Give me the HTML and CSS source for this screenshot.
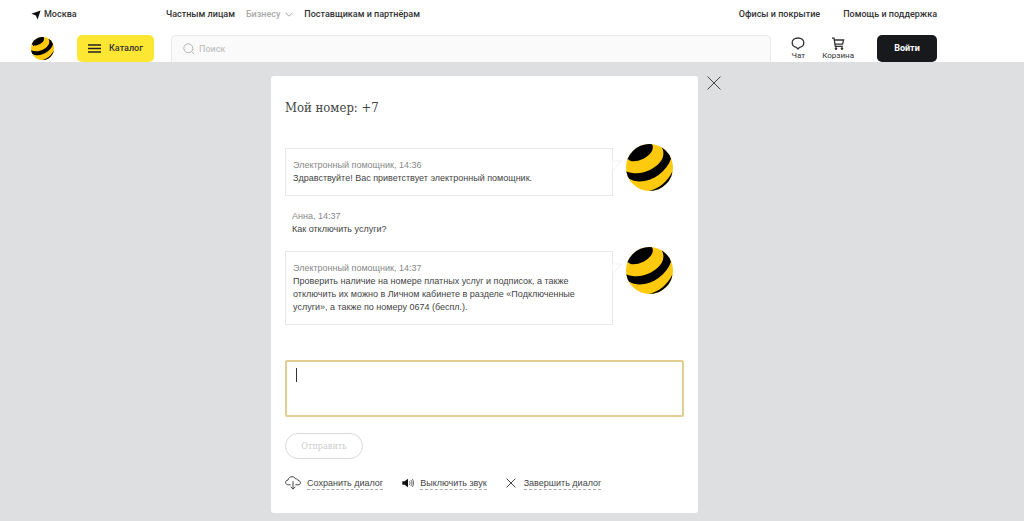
FILE: index.html
```
<!DOCTYPE html>
<html lang="ru">
<head>
<meta charset="utf-8">
<meta name="viewport" content="width=device-width, initial-scale=1">
<title>Чат с электронным помощником</title>
<link rel="stylesheet" href="styles.css">
</head>
<body>
<svg class="defs" aria-hidden="true">
  <defs>
    <clipPath id="ball-clip"><circle cx="70" cy="70" r="70"/></clipPath>
    <symbol id="ball" viewBox="0 0 140 140">
      <g clip-path="url(#ball-clip)">
        <rect class="ball-base" width="140" height="140"/>
        <path d="M9 46C9 53 32 54 52 44C70 34 80 22 80 10C80 5 78 2 76 -2L0 -4V46Z"/>
        <path d="M-2 80C22 91 50 89 74 76C98 63 110 47 111 33C112 25 111 18 106 10L126 14L134 44C128 62 116 78 97 92C70 112 34 118 8 103L-2 98Z"/>
        <path d="M60 142C92 137 122 116 138 82L144 142H60Z"/>
      </g>
    </symbol>
  </defs>
</svg>

<header class="header">
  <div class="container">
    <nav class="topbar" aria-label="Разделы сайта">
      <a class="topbar-link city" href="#">
        <svg class="icon-pin" viewBox="0 0 10 10" aria-hidden="true"><path d="M9.600 .4L6.600 9.600L4.800 5.400L.4 3.800Z"/></svg>
        Москва
      </a>
      <a class="topbar-link" href="#">Частным лицам</a>
      <a class="topbar-link muted" href="#">
        Бизнесу
        <svg class="icon-chevron" viewBox="0 0 8 5" aria-hidden="true"><path d="M.5 .7L4 4.200L7.500 .7"/></svg>
      </a>
      <a class="topbar-link" href="#">Поставщикам и партнёрам</a>
      <a class="topbar-link offices" href="#">Офисы и покрытие</a>
      <a class="topbar-link" href="#">Помощь и поддержка</a>
    </nav>
    <div class="mainbar">
      <a class="logo" href="#" aria-label="На главную"><svg class="logo-ball" viewBox="0 0 140 140" aria-hidden="true"><use href="#ball"/></svg></a>
      <button class="catalog" type="button">
        <svg class="icon-menu" viewBox="0 0 13 9" aria-hidden="true"><path d="M0 1H13M0 4.500H13M0 8H13"/></svg>
        Каталог
      </button>
      <div class="search">
        <svg class="icon-search" viewBox="0 0 12 12" aria-hidden="true"><circle cx="5.300" cy="5.300" r="4.500"/><path d="M8.600 8.600L11.400 11.400"/></svg>
        <input class="search-input" type="search" placeholder="Поиск" aria-label="Поиск">
      </div>
      <a class="shortcut" href="#">
        <svg class="icon-chat" viewBox="0 0 14 13" aria-hidden="true"><path d="M5.400 10.400C2.700 9.900 1.200 8.100 1.200 5.800C1.200 3 3.500 1 7 1S12.800 3 12.800 5.800C12.800 8.100 11.300 9.900 8.600 10.400L7 12Z"/></svg>
        Чат
      </a>
      <a class="shortcut" href="#">
        <svg class="icon-cart" viewBox="0 0 14 13" aria-hidden="true"><path d="M1 1.200H3L4.300 9.400H11.800M3.300 3H12.600L11.600 7.200H4"/><circle cx="5" cy="11.600" r=".7"/><circle cx="11" cy="11.600" r=".7"/></svg>
        Корзина
      </a>
      <button class="login" type="button">Войти</button>
    </div>
  </div>
</header>

<main class="stage">
  <div class="dialog-wrap">
    <section class="dialog" role="dialog" aria-labelledby="dialog-title">
      <h1 class="title" id="dialog-title">Мой номер: +7</h1>

      <div class="messages">
        <article class="message">
          <div class="bubble">
            <p class="author">Электронный помощник, 14:36</p>
            <p>Здравствуйте! Вас приветствует электронный помощник.</p>
            <svg class="tail" viewBox="0 0 11 12" aria-hidden="true"><path d="M0 1H10L1 10"/></svg>
          </div>
          <svg class="avatar" viewBox="0 0 140 140" aria-hidden="true"><use href="#ball"/></svg>
        </article>
        <article class="own">
          <p class="author">Анна, 14:37</p>
          <p>Как отключить услуги?</p>
        </article>
        <article class="message">
          <div class="bubble">
            <p class="author">Электронный помощник, 14:37</p>
            <p>Проверить наличие на номере платных услуг и подписок, а также отключить их можно в Личном кабинете в разделе «Подключенные услуги», а также по номеру 0674 (беспл.).</p>
            <svg class="tail" viewBox="0 0 11 12" aria-hidden="true"><path d="M0 1H10L1 10"/></svg>
          </div>
          <svg class="avatar" viewBox="0 0 140 140" aria-hidden="true"><use href="#ball"/></svg>
        </article>
      </div>

      <form class="compose">
        <div class="field">
          <textarea class="field-input" aria-label="Сообщение"></textarea>
          <span class="caret"></span>
        </div>
        <button class="send" type="button" disabled>Отправить</button>
      </form>

      <div class="actions">
        <button class="action" type="button">
          <svg class="icon-cloud" viewBox="0 0 16 14" aria-hidden="true"><path d="M5.600 8.800H3.400C1.800 8.800 .6 7.800 .6 6.400C.6 5 1.600 4.200 3 4.100C3.300 2 4.900 .7 7 .7C8.700 .7 10.100 1.600 10.700 3C12 2.600 13 3.400 13.100 4.500C14.500 4.600 15.400 5.500 15.400 6.700C15.400 8 14.500 8.800 13.100 8.800H10.400M8 5.200V13M5.700 10.800L8 13.100L10.300 10.800"/></svg>
          <span class="action-text">Сохранить диалог</span>
        </button>
        <button class="action" type="button">
          <svg class="icon-sound" viewBox="0 0 12 10" aria-hidden="true"><path class="solid" d="M.3 3.200H2.600L6 .8V9.200L2.600 6.800H.3Z"/><path d="M7.400 3.200C8.200 4.300 8.200 5.700 7.400 6.800M8.900 2C10.300 3.800 10.300 6.200 8.900 8M10.300 1C12 3.300 12 6.700 10.300 9"/></svg>
          <span class="action-text">Выключить звук</span>
        </button>
        <button class="action finish" type="button">
          <svg class="icon-cross" viewBox="0 0 10 10" aria-hidden="true"><path d="M.6 .6L9.400 9.400M9.400 .6L.6 9.400"/></svg>
          <span class="action-text">Завершить диалог</span>
        </button>
      </div>
    </section>
    <button class="close" type="button" aria-label="Закрыть">
      <svg class="icon-close" viewBox="0 0 14 14" aria-hidden="true"><path d="M.5 .5L13.500 13.500M13.500 .5L.5 13.500"/></svg>
    </button>
  </div>
</main>
</body>
</html>
```
FILE: styles.css
```
* {
  box-sizing: border-box;
}

body {
  margin: 0;
  min-height: 100vh;
  display: flex;
  flex-direction: column;
  background: #dddfe1;
  color: #444;
  font: 9px/13px "Liberation Sans", Arial, sans-serif;
}

p,
h1 {
  margin: 0;
}

button {
  margin: 0;
  padding: 0;
  border: 0;
  background: none;
  color: inherit;
  font: inherit;
  cursor: pointer;
}

a {
  color: inherit;
  text-decoration: none;
}

svg {
  display: block;
  flex: none;
  fill: none;
  stroke: currentColor;
}

.defs {
  position: absolute;
  width: 0;
  height: 0;
}

.logo-ball,
.avatar {
  fill: #000;
  stroke: none;
}

.ball-base {
  fill: #ffc90e;
}

/* Header */

.header {
  padding: 8px 87px 0 31px;
  background: #fff;
  color: #333;
  font-family: Roboto, "Open Sans", sans-serif;
  font-weight: 500;
}

.container {
  max-width: 906px;
  margin: 0 auto;
}

.topbar {
  display: flex;
  align-items: center;
  gap: 11px;
  height: 13px;
  white-space: nowrap;
}

.topbar-link {
  display: flex;
  align-items: center;
}

.city {
  gap: 3px;
  width: 124px;
}

.muted {
  gap: 5px;
  color: #aaa;
}

.offices {
  margin-left: auto;
  margin-right: 12px;
}

.icon-pin {
  width: 10px;
  height: 10px;
  fill: #111;
  stroke: none;
}

.icon-chevron {
  width: 8px;
  height: 5px;
}

.mainbar {
  display: flex;
  align-items: flex-start;
  margin-top: 14px;
  height: 27px;
}

.logo {
  margin: 2px 23px 0 0;
}

.logo-ball {
  width: 23px;
  height: 23px;
}

.logo .ball-base {
  fill: #fbd52a;
}

.catalog {
  display: flex;
  align-items: center;
  justify-content: center;
  gap: 8px;
  width: 77px;
  height: 27px;
  margin-right: 17px;
  border-radius: 5px;
  background: #fee733;
}

.icon-menu {
  width: 13px;
  height: 9px;
  stroke: #222;
  stroke-width: 1.5;
}

.search {
  display: flex;
  flex: 1;
  align-items: center;
  gap: 4px;
  height: 27px;
  padding: 0 11px;
  border: 1px solid #e9e9e9;
  border-bottom: 0;
  border-radius: 5px 5px 0 0;
  background: #fafafa;
  color: #b5b5b5;
}

.icon-search {
  width: 12px;
  height: 12px;
}

.search-input {
  flex: 1;
  min-width: 0;
  padding: 0;
  border: 0;
  outline: 0;
  background: none;
  font: inherit;
}

.search-input::placeholder {
  color: #c4c4c4;
}

.shortcut {
  display: flex;
  flex-direction: column;
  align-items: center;
  gap: 1px;
  margin: 2px 0 0 20px;
  font-size: 8px;
  font-weight: 400;
  line-height: 10px;
}

.shortcut + .shortcut {
  margin-left: 17px;
}

.icon-chat,
.icon-cart {
  width: 14px;
  height: 13px;
  stroke-width: 1.3;
}

.login {
  width: 60px;
  height: 27px;
  margin-left: 23px;
  border-radius: 5px;
  background: #17191d;
  color: #fff;
  font-weight: 700;
}

/* Dialog */

.stage {
  flex: 1;
  padding: 14px 55px 8px 0;
}

.dialog-wrap {
  position: relative;
  width: 427px;
  max-width: 90%;
  margin: 0 auto;
}

.dialog {
  padding: 22px 14px 23px;
  border-radius: 3px;
  background: #fff;
}

.title {
  font: 400 13px/20px "DejaVu Serif Condensed", "DejaVu Serif", serif;
}

.close {
  position: absolute;
  top: 0;
  left: 100%;
  padding: 0 0 0 9px;
}

.icon-close {
  width: 14px;
  height: 14px;
}

.messages {
  display: flex;
  flex-direction: column;
  gap: 14px;
  margin-top: 30px;
}

.message {
  display: flex;
  align-items: flex-start;
  gap: 13px;
}

.bubble {
  position: relative;
  flex: 1;
  padding: 10px 20px 10px 7px;
  border: 1px solid #e8e8e8;
}

.author {
  color: #888;
}

.tail {
  position: absolute;
  top: 11px;
  left: 100%;
  width: 11px;
  height: 12px;
  fill: #fff;
  stroke: #f0f0f0;
}

.avatar {
  width: 47px;
  height: 47px;
  margin: -4px 11px 0 0;
}

.own {
  padding: 0 7px 1px;
}

.field {
  position: relative;
  margin-top: 35px;
}

.field-input {
  display: block;
  width: 100%;
  height: 57px;
  padding: 7px 10px;
  border: 2px solid #e0cf91;
  border-radius: 2px;
  outline: 0;
  resize: none;
  background: #fff;
  color: #333;
  font: inherit;
}

.caret {
  position: absolute;
  top: 8px;
  left: 11px;
  width: 1px;
  height: 14px;
  background: #333;
}

.send {
  width: 78px;
  height: 26px;
  margin-top: 16px;
  border: 1px solid #d9d9d9;
  border-radius: 13px;
  color: #ccc;
  font: 9px/13px "DejaVu Serif Condensed", "DejaVu Serif", serif;
}

.actions {
  display: flex;
  align-items: center;
  gap: 19px;
  margin-top: 17px;
}

.action {
  display: flex;
  align-items: center;
  gap: 6px;
  height: 14px;
}

.finish {
  gap: 8px;
}

.action-text {
  border-bottom: 1px dashed #aaa;
  line-height: 12px;
}

.icon-cloud {
  width: 16px;
  height: 14px;
}

.icon-sound {
  width: 12px;
  height: 10px;
  stroke-width: .8;
}

.solid {
  fill: #111;
  stroke: none;
}

.icon-cross {
  width: 10px;
  height: 10px;
}
```
